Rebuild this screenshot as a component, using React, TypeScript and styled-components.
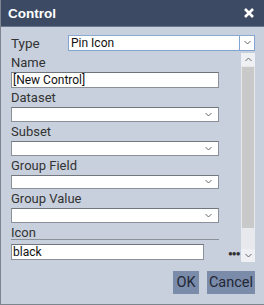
import React from "react";
import styled, { createGlobalStyle } from "styled-components";

const Global = createGlobalStyle`
  html, body {
    margin: 0;
    padding: 0;
    background: #c8d0dd;
  }
  * { box-sizing: border-box; }
`;

const Win = styled.div`
  width: 264px;
  height: 305px;
  background: #c8d0dd;
  border-left: 1px solid #7f858f;
  border-bottom: 1px solid #7f858f;
  display: flex;
  flex-direction: column;
  font-family: Roboto, "Liberation Sans", sans-serif;
  color: #222;
  overflow: hidden;
`;

const TitleBar = styled.div`
  height: 27px;
  flex: none;
  background: #3d4a64;
  border-bottom: 1px solid #6b7690;
  display: flex;
  align-items: center;
  justify-content: space-between;
  padding: 0 9px 0 7px;
  color: #fff;
  font-family: "Liberation Sans", Arial, sans-serif;
  font-weight: bold;
  font-size: 13.5px;
`;

const Close = styled.button`
  border: 0;
  background: transparent;
  padding: 0;
  width: 12px;
  height: 12px;
  display: flex;
  cursor: pointer;
`;

const Body = styled.div`
  flex: 1;
  display: flex;
  flex-direction: column;
  padding: 8px 9px 0 9px;
`;

const TypeRow = styled.div`
  display: flex;
  align-items: center;
  height: 15px;
  margin-bottom: 3px;
`;

const TypeLabel = styled.span`
  width: 58px;
  padding-left: 1px;
  font-size: 13.5px;
  color: #333;
`;

const Select = styled.div<{ $w?: number; $focus?: boolean }>`
  width: ${({ $w }) => ($w ? `${$w}px` : "208px")};
  height: 16px;
  background: #fff;
  border: 1px solid ${({ $focus }) => ($focus ? "#7fa3d3" : "#8b9099")};
  border-top-color: ${({ $focus }) => ($focus ? "#8aa8d0" : "#72767d")};
  display: flex;
  align-items: center;
  font-size: 12px;
  color: #111;
`;

const SelectText = styled.span`
  flex: 1;
  padding-left: 2px;
  white-space: nowrap;
`;

const ArrowBox = styled.span<{ $boxed?: boolean }>`
  width: ${({ $boxed }) => ($boxed ? "15px" : "20px")};
  height: 100%;
  display: flex;
  align-items: center;
  justify-content: center;
  border-left: ${({ $boxed }) => ($boxed ? "1px solid #7fa3d3" : "0")};
`;

const Scroll = styled.div`
  height: 209px;
  display: flex;
  padding-left: 1px;
`;

const Fields = styled.div`
  width: 231px;
  display: flex;
  flex-direction: column;
`;

const Label = styled.div<{ $line?: boolean }>`
  height: ${({ $line }) => ($line ? "17px" : "19px")};
  width: 208px;
  font-size: 13px;
  line-height: 20px;
  color: #333;
  border-bottom: ${({ $line }) => ($line ? "1px solid #8b9099" : "0")};
  margin-bottom: ${({ $line }) => ($line ? "2px" : "0")};
`;

const TextInput = styled.div<{ $w?: number }>`
  width: ${({ $w }) => ($w ? `${$w}px` : "208px")};
  height: 16px;
  background: #fff;
  border: 1px solid #8b9099;
  border-top-color: #6f737a;
  font-size: 12px;
  line-height: 14px;
  padding-left: 1px;
  color: #111;
`;

const IconRow = styled.div`
  display: flex;
  align-items: center;
`;

const Dots = styled.span`
  margin-left: 24px;
  font-size: 8px;
  letter-spacing: -1px;
  color: #333;
  line-height: 16px;
  padding-top: 4px;
`;

const ScrollBar = styled.div`
  width: 14px;
  display: flex;
  flex-direction: column;
  background: #e7e9ed;
`;

const SbBtn = styled.div`
  height: 13px;
  display: flex;
  align-items: center;
  justify-content: center;
  background: #eef0f3;
`;

const Thumb = styled.div`
  height: 161px;
  margin: 1px 1px 0 1px;
  background: #c9c9c9;
`;

const Track = styled.div`
  flex: 1;
`;

const Footer = styled.div`
  display: flex;
  justify-content: flex-end;
  gap: 8px;
  padding: 9px 0 0 0;
`;

const Btn = styled.button<{ $w: number }>`
  width: ${({ $w }) => $w}px;
  height: 23px;
  border: 0;
  background: #7b8baa;
  color: #222836;
  font-family: Roboto, "Liberation Sans", sans-serif;
  font-size: 14.5px;
  padding: 0;
  cursor: pointer;
`;

const Chevron = ({ up }: { up?: boolean }) => (
  <svg width="7" height="5" viewBox="0 0 7 5">
    <path
      d={up ? "M0.5 4 L3.5 1 L6.5 4" : "M0.5 1 L3.5 4 L6.5 1"}
      fill="none"
      stroke="#666"
      strokeWidth="1"
    />
  </svg>
);

const Drop = () => (
  <Select>
    <SelectText />
    <ArrowBox>
      <Chevron />
    </ArrowBox>
  </Select>
);

export default function App() {
  return (
    <>
      <Global />
      <Win>
        <TitleBar>
          <span>Control</span>
          <Close aria-label="close">
            <svg width="12" height="12" viewBox="0 0 12 12">
              <path d="M2 2 L10 10 M10 2 L2 10" stroke="#fff" strokeWidth="2.6" />
            </svg>
          </Close>
        </TitleBar>
        <Body>
          <TypeRow>
            <TypeLabel>Type</TypeLabel>
            <Select $w={187} $focus>
              <SelectText>Pin Icon</SelectText>
              <ArrowBox $boxed>
                <Chevron />
              </ArrowBox>
            </Select>
          </TypeRow>
          <Scroll>
            <Fields>
              <Label>Name</Label>
              <TextInput>[New Control]</TextInput>
              <Label>Dataset</Label>
              <Drop />
              <Label>Subset</Label>
              <Drop />
              <Label>Group Field</Label>
              <Drop />
              <Label>Group Value</Label>
              <Drop />
              <Label $line>Icon</Label>
              <IconRow>
                <TextInput $w={193}>black</TextInput>
                <Dots>●●●</Dots>
              </IconRow>
            </Fields>
            <ScrollBar>
              <SbBtn>
                <Chevron up />
              </SbBtn>
              <Thumb />
              <Track />
              <SbBtn>
                <Chevron />
              </SbBtn>
            </ScrollBar>
          </Scroll>
          <Footer>
            <Btn $w={26}>OK</Btn>
            <Btn $w={48}>Cancel</Btn>
          </Footer>
        </Body>
      </Win>
    </>
  );
}
